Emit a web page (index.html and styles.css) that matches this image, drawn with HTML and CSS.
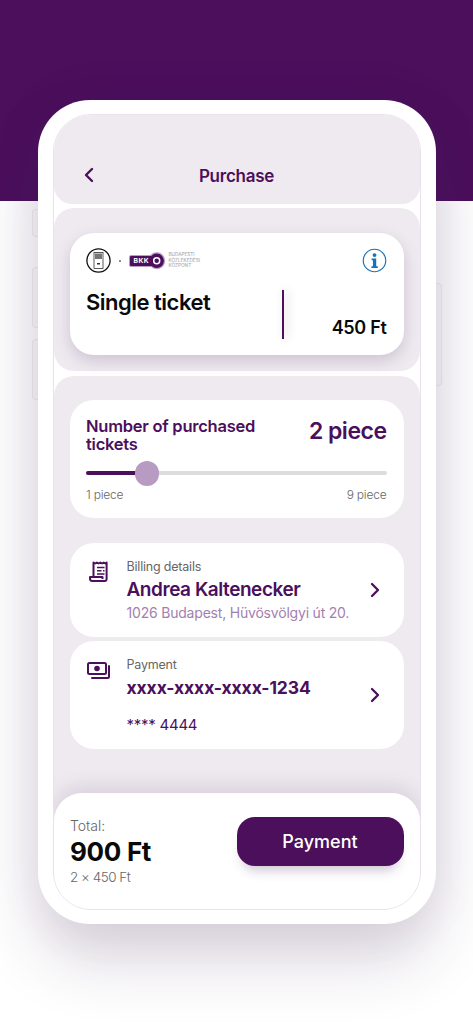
FILE: index.html
```html
<!DOCTYPE html>
<html lang="en">
<head>
<meta charset="utf-8">
<title>Purchase</title>
<link rel="stylesheet" href="styles.css">
</head>
<body>
<div class="phone">
  <i class="side side-a"></i><i class="side side-b"></i><i class="side side-c"></i><i class="side side-d"></i>
  <div class="screen">
    <header class="head">
      <svg class="back" width="12" height="16" viewBox="0 0 12 16"><path d="M9 2 3 8l6 6" fill="none" stroke="#4b0f5c" stroke-width="2.4" stroke-linecap="round" stroke-linejoin="round"/></svg>
      <h1 class="title">Purchase</h1>
    </header>
    <section class="band band-ticket">
      <div class="card ticket">
        <div class="logos">
          <svg class="stop" width="25" height="25" viewBox="0 0 25 25"><circle cx="12.500" cy="12.500" r="11.600" fill="#fff" stroke="#111" stroke-width="1.300"/><rect x="8" y="4.500" width="9" height="16" fill="#fff" stroke="#333" stroke-width=".8"/><rect x="9" y="5.500" width="7" height="5.500" fill="#777"/><path d="M11 15h3v1.500h-3z" fill="#333"/></svg>
          <i class="dot"></i>
          <svg class="bkk" width="37" height="18" viewBox="0 0 37 18"><circle cx="27.700" cy="8.800" r="8.500" fill="#b99bc4"/><rect x=".5" y="3.500" width="24" height="11" rx="1.500" fill="#4b0f5c" stroke="#b99bc4"/><circle cx="27.700" cy="8.800" r="7.200" fill="#4b0f5c"/><circle cx="27.700" cy="8.800" r="3" fill="none" stroke="#fff" stroke-width="1.500"/><text class="bkk-mark" x="4.500" y="11.300">BKK</text></svg>
          <span class="bkk-name">BUDAPESTI<br>KÖZLEKEDÉSI<br>KÖZPONT</span>
          <svg class="info" width="25" height="25" viewBox="0 0 26 26"><circle cx="13" cy="13" r="11.700" fill="#fff" stroke="#1672bb" stroke-width="1.200"/><circle cx="13" cy="7.400" r="2" fill="#1672bb"/><path d="M10 11h4.800v8h1.600v1.700H9.800V19h1.600v-6.300H10z" fill="#1672bb"/></svg>
        </div>
        <div class="ticket-main">
          <div class="ticket-name">Single ticket</div>
          <div class="ticket-price">450 Ft</div>
        </div>
      </div>
    </section>
    <section class="band band-form">
      <div class="card qty">
        <div class="qty-top">
          <div class="qty-label">Number of purchased tickets</div>
          <div class="qty-value">2 piece</div>
        </div>
        <div class="slider"><span class="slider-fill"></span><span class="slider-thumb"></span></div>
        <div class="qty-range"><span>1 piece</span><span>9 piece</span></div>
      </div>
      <div class="card row row-billing">
        <svg class="row-icon" width="20" height="22" viewBox="0 0 20 22"><path d="M4.500 15V1.500l1.700 1 1.700-1 1.700 1 1.700-1 1.700 1 1.700-1 1.700 1 1.200-1V18a2 2 0 0 1-2 2H3.500A2.500 2.500 0 0 1 1 17.500V16h12.500v2" fill="none" stroke="#4b0f5c" stroke-width="2" stroke-linejoin="round"/><path d="M8 6.500h7.500M8 9.800h4.500M14 9.800h1.500M8 13h7.500" stroke="#4b0f5c" stroke-width="1.600"/></svg>
        <div class="row-body">
          <div class="row-label">Billing details</div>
          <div class="row-name">Andrea Kaltenecker</div>
          <div class="row-sub">1026 Budapest, Hüvösvölgyi út 20.</div>
        </div>
        <svg class="chev" width="12" height="16" viewBox="0 0 12 16"><path d="M3 2l6 6-6 6" fill="none" stroke="#4b0f5c" stroke-width="2.300" stroke-linecap="round" stroke-linejoin="round"/></svg>
      </div>
      <div class="card row row-pay">
        <svg class="row-icon pay-icon" width="23" height="17" viewBox="0 0 23 17"><rect x="1" y="1" width="18" height="11" rx="1.500" fill="none" stroke="#4b0f5c" stroke-width="2"/><circle cx="10" cy="6.500" r="2.800" fill="#4b0f5c"/><path d="M22 4v10.500a1.500 1.500 0 0 1-1.500 1.500H5" fill="none" stroke="#4b0f5c" stroke-width="2" stroke-linecap="round"/></svg>
        <div class="row-body">
          <div class="row-label">Payment</div>
          <div class="row-name row-card">xxxx-xxxx-xxxx-1234</div>
          <div class="row-code">**** 4444</div>
        </div>
        <svg class="chev" width="12" height="16" viewBox="0 0 12 16"><path d="M3 2l6 6-6 6" fill="none" stroke="#4b0f5c" stroke-width="2.300" stroke-linecap="round" stroke-linejoin="round"/></svg>
      </div>
    </section>
    <footer class="foot">
      <div class="total">
        <div class="total-label">Total:</div>
        <div class="total-value">900 Ft</div>
        <div class="total-sub">2 × 450 Ft</div>
      </div>
      <button class="pay" type="button">Payment</button>
    </footer>
  </div>
</div>
</body>
</html>
```
FILE: styles.css
```css
* { box-sizing: border-box; }
html, body { margin: 0; height: 100%; }
body {
  width: 473px;
  height: 1024px;
  overflow: hidden;
  padding: 100px 37px 0 37.500px;
  font-family: Inter, "Noto Sans", sans-serif;
  color: #4b0f5c;
  background: linear-gradient(#4b0f5c 201px, #fff 201px);
}
.phone {
  position: relative;
  width: 398.500px;
  height: 824px;
  padding: 14px 15.500px 14px 15px;
  background: #fff;
  border-radius: 52px;
  box-shadow: 0 36px 64px rgba(70, 40, 85, .2), 0 0 50px rgba(70, 40, 85, .08);
}
.side {
  position: absolute;
  width: 7px;
  border: 1px solid #f0eef1;
  background: #fbfbfc;
  z-index: -1;
}
.side-a, .side-b, .side-c { left: -6px; border-right: 0; border-radius: 4px 0 0 4px; }
.side-a { top: 109px; height: 28px; }
.side-b { top: 167px; height: 61px; }
.side-c { top: 239px; height: 61px; }
.side-d { right: -6px; top: 183px; height: 103px; border-left: 0; border-radius: 0 4px 4px 0; }
.screen {
  display: flex;
  flex-direction: column;
  height: 796px;
  overflow: hidden;
  background: #fff;
  border: 1px solid #ebe0ee;
  border-radius: 38px;
}
.head {
  flex: none;
  position: relative;
  display: flex;
  align-items: center;
  justify-content: center;
  height: 89px;
  padding-top: 33px;
  background: #efeaf0;
  border-radius: 0 0 18px 18px;
}
.back { position: absolute; left: 29.500px; top: 52px; }
.title { margin: 0; font-size: 17px; line-height: 22px; font-weight: 600; letter-spacing: -.25px; }
.band { background: #efeaf0; border-radius: 20px 20px 0 0; }
.band-ticket {
  flex: none;
  height: 163px;
  margin-top: 4px;
  padding: 25px 16px 0;
  border-radius: 20px;
}
.card { background: #fff; border-radius: 24px; }
.ticket {
  height: 122px;
  padding: 15px 17px 0 16.500px;
  box-shadow: 0 6px 16px rgba(75, 40, 95, .2);
}
.logos { display: flex; align-items: center; height: 25px; }
.stop { flex: none; }
.dot { width: 2px; height: 2px; margin: 0 8px; background: #8d4f9c; border-radius: 50%; }
.bkk { flex: none; }
.bkk-mark { fill: #fff; font-size: 6.800px; font-weight: 700; letter-spacing: .4px; }
.bkk-name {
  margin-left: 2.500px;
  color: #9a9a9a;
  font-size: 4.700px;
  line-height: 5.400px;
}
.info { margin-left: auto; }
.ticket-main { display: flex; justify-content: space-between; height: 49px; margin-top: 17px; position: relative; }
.ticket-main::before {
  content: "";
  position: absolute;
  left: 195.500px;
  top: 0;
  width: 2px;
  height: 49px;
  background: #4b0f5c;
  box-shadow: 3px 0 10px rgba(75, 40, 95, .28);
}
.ticket-name { margin-top: -2px; color: #0a0a0a; font-size: 22px; line-height: 28px; font-weight: 600; letter-spacing: -.5px; }
.ticket-price { align-self: flex-end; color: #0a0a0a; font-size: 18px; line-height: 22px; font-weight: 600; letter-spacing: -.3px; }
.band-form {
  flex: 1;
  min-height: 0;
  margin-top: 5px;
  padding: 24px 16px 0;
}
.qty { height: 118px; padding: 17px 17px 0 16.500px; }
.qty-top { display: flex; justify-content: space-between; align-items: flex-start; height: 37px; }
.qty-label { width: 190px; font-size: 16.500px; line-height: 18px; font-weight: 600; letter-spacing: -.25px; }
.qty-value { font-size: 23px; line-height: 28px; font-weight: 600; letter-spacing: -.5px; }
.slider { position: relative; height: 4px; margin-top: 17px; background: #dcdcdc; border-radius: 2px; }
.slider-fill { position: absolute; left: 0; top: 0; width: 55px; height: 4px; background: #4b0f5c; border-radius: 2px; }
.slider-thumb { position: absolute; left: 48.500px; top: -10px; width: 24.500px; height: 24.500px; background: #b89bc2; border-radius: 50%; }
.qty-range { display: flex; justify-content: space-between; margin-top: 12px; color: #666; font-size: 12px; font-weight: 300; line-height: 16px; letter-spacing: -.2px; }
.row { display: flex; align-items: center; padding: 0 23px 0 16px; position: relative; }
.row-billing { height: 94px; margin-top: 25px; }
.row-pay { height: 108px; margin-top: 4px; }
.row-icon { position: absolute; left: 19px; top: 18px; }
.pay-icon { left: 17px; top: 20.500px; }
.row-body { flex: 1; padding-left: 41px; }
.chev { flex: none; }
.row-label { color: #666; font-size: 12.500px; line-height: 16px; letter-spacing: -.2px; }
.row-billing .row-label { margin-top: 1px; }
.row-name { margin-top: 2px; font-size: 19px; line-height: 26px; font-weight: 600; letter-spacing: -.45px; }
.row-sub { color: #a27fb0; font-size: 14px; line-height: 20px; letter-spacing: -.2px; }
.row-card { margin-top: 3px; font-size: 17.500px; line-height: 24px; font-weight: 700; letter-spacing: -.1px; }
.row-pay .row-label { margin-top: 1px; }
.row-code { margin-top: 15px; font-size: 15px; line-height: 20px; letter-spacing: -.25px; }
.foot {
  flex: none;
  position: relative;
  display: flex;
  align-items: flex-start;
  justify-content: space-between;
  height: 116px;
  margin-top: -30px;
  padding: 24px 16px 0 16.500px;
  background: #fff;
  border-radius: 28px 28px 0 0;
  box-shadow: 0 -6px 20px rgba(75, 40, 95, .14);
}
.total-label { color: #666; font-size: 14px; font-weight: 300; line-height: 17px; }
.total-value { color: #0a0a0a; font-size: 26px; line-height: 32px; font-weight: 700; letter-spacing: -.3px; margin-top: 2px; }
.total-sub { color: #666; font-size: 13.500px; font-weight: 300; line-height: 17px; margin-top: 1px; letter-spacing: -.5px; }
.pay {
  width: 167px;
  height: 49px;
  padding: 0;
  border: 0;
  color: #fff;
  background: #4b0f5c;
  border-radius: 18px;
  font: 500 18px/22px Inter, "Noto Sans", sans-serif;
  box-shadow: 0 10px 12px -6px rgba(75, 40, 95, .28);
}
```
